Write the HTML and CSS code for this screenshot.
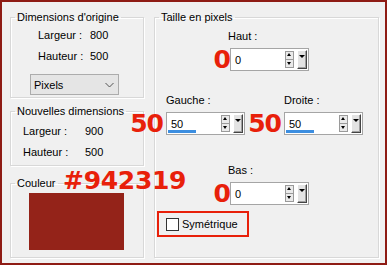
FILE: index.html
```html
<!DOCTYPE html>
<html lang="fr">
<head>
<meta charset="utf-8">
<link rel="stylesheet" href="styles.css">
</head>
<body>
<div class="frame">
  <div class="col-left">
    <fieldset class="grp g1">
      <legend>Dimensions d'origine</legend>
      <div class="inner in1">
        <div class="kv kv1">
          <span>Largeur :</span><span>800</span>
          <span>Hauteur :</span><span>500</span>
        </div>
        <div class="select"><span>Pixels</span>
          <svg width="9" height="6" viewBox="0 0 9 6"><path d="M0.5 1 L4.5 5 L8.5 1" fill="none" stroke="#555" stroke-width="1"/></svg>
        </div>
      </div>
    </fieldset>
    <fieldset class="grp g2">
      <legend>Nouvelles dimensions</legend>
      <div class="inner in2">
        <div class="kv kv2">
          <span>Largeur :</span><span>900</span>
          <span>Hauteur :</span><span>500</span>
        </div>
      </div>
    </fieldset>
    <fieldset class="grp g3">
      <legend>Couleur</legend>
      <div class="inner in3">
        <div class="swatch"></div>
      </div>
    </fieldset>
  </div>
  <fieldset class="grp g4">
    <legend>Taille en pixels</legend>
    <div class="field f-haut">
      <div class="lbl">Haut :</div>
      <div class="row"><span class="ann ann0">0</span>
        <div class="spin"><span class="val">0</span><span class="arrows"><i class="up"></i><i class="dn"></i></span><span class="drop"><i></i></span></div>
      </div>
    </div>
    <div class="pair">
      <div class="field f-gauche">
        <div class="lbl">Gauche :</div>
        <div class="row"><span class="ann ann50">50</span>
          <div class="spin"><span class="val">50</span><span class="bar"></span><span class="arrows"><i class="up"></i><i class="dn"></i></span><span class="drop"><i></i></span></div>
        </div>
      </div>
      <div class="field f-droite">
        <div class="lbl">Droite :</div>
        <div class="row"><span class="ann ann50">50</span>
          <div class="spin"><span class="val">50</span><span class="bar"></span><span class="arrows"><i class="up"></i><i class="dn"></i></span><span class="drop"><i></i></span></div>
        </div>
      </div>
    </div>
    <div class="field f-bas">
      <div class="lbl">Bas :</div>
      <div class="row"><span class="ann ann0">0</span>
        <div class="spin"><span class="val">0</span><span class="arrows"><i class="up"></i><i class="dn"></i></span><span class="drop"><i></i></span></div>
      </div>
    </div>
    <label class="sym"><span class="cb"></span><span>Symétrique</span></label>
  </fieldset>
  <div class="hex">#942319</div>
</div>
</body>
</html>
```
FILE: styles.css
```css
html, body { margin: 0; padding: 0; }
body {
  font-family: "Liberation Sans", Arial, sans-serif;
  font-size: 11px;
  line-height: 14px;
  color: #000;
  background: #f0f0f0;
}
.frame {
  position: relative;
  width: 387px;
  height: 265px;
  box-sizing: border-box;
  border: 2px solid #8e1b14;
  background: #f0f0f0;
  display: flex;
  gap: 10px;
  padding: 8px 6px 5px 8px;
}
.col-left {
  width: 134px;
  display: flex;
  flex-direction: column;
}
.grp {
  margin: 0;
  padding: 0;
  border: 1px solid #d8d8d8;
  box-shadow: inset 1px 1px 0 #fff, 1px 1px 0 #fff;
  min-width: 0;
  box-sizing: border-box;
}
.grp legend {
  padding: 0 2px;
  margin-left: 4px;
  line-height: 14px;
  white-space: nowrap;
}
.g1 { height: 88px; }
.g2 { height: 62px; margin-top: 6px; }
.g3 { height: 82px; margin-top: 10px; }
.g4 { width: 225px; height: 248px; }
.in1 { padding: 4px 0 0 27px; }
.in2 { padding: 6px 0 0 12px; }
.in3 { padding: 3px 0 0 18px; }

.kv {
  display: grid;
  row-gap: 7px;
}
.kv1 { grid-template-columns: 52px auto; }
.kv2 { grid-template-columns: 62px auto; }

.select {
  margin: 11px 0 0 -8px;
  width: 89px;
  height: 21px;
  box-sizing: border-box;
  border: 1px solid #acacac;
  background: #e5e5e5;
  display: flex;
  align-items: center;
  justify-content: space-between;
  padding: 0 4px 0 3px;
}
.select svg { display: block; margin-top: 1px; }

.swatch {
  width: 95px;
  height: 57px;
  background: #942319;
}

/* right group */
.field { display: flex; flex-direction: column; }
.lbl { line-height: 14px; }
.row { display: flex; align-items: center; margin-top: 5px; }
.f-haut, .f-bas { margin-left: 55px; }
.f-haut { margin-top: 5px; }
.f-haut .lbl, .f-bas .lbl { margin-left: 18px; }
.pair { display: flex; margin-top: 22px; margin-left: -28px; }
.f-gauche .lbl { margin-left: 39px; }
.f-droite .lbl { margin-left: 39px; }
.f-bas { margin-top: 28px; }

.ann {
  color: #e8200a;
  font-family: "DejaVu Sans", sans-serif;
  font-weight: bold;
  font-size: 25px;
  line-height: 20px;
  text-align: right;
  letter-spacing: -1px;
}
.ann0 { width: 20px; }
.ann50 { width: 39px; padding-right: 3px; box-sizing: border-box; }

.spin {
  position: relative;
  width: 79px;
  height: 23px;
  box-sizing: border-box;
  border: 1px solid #a5a5a5;
  background: #fff;
  display: flex;
  align-items: center;
}
.val { flex: 1; padding-left: 4px; }
.bar {
  position: absolute;
  left: 1px;
  bottom: 1px;
  width: 28px;
  height: 3px;
  background: #3c8ee0;
}
.arrows {
  display: flex;
  flex-direction: column;
  width: 9px;
  height: 17px;
  margin-right: 3px;
}
.arrows i {
  position: relative;
  flex: 1;
  box-sizing: border-box;
  border: 1px solid #9a9a9a;
  background: #eaeaea;
}
.arrows i + i { border-top: none; }
.arrows i::after {
  content: "";
  position: absolute;
  left: 1px;
  top: 1px;
  border-left: 2.5px solid transparent;
  border-right: 2.5px solid transparent;
}
.arrows .up::after { border-bottom: 3px solid #000; }
.arrows .dn::after { border-top: 3px solid #000; top: 2px; }
.drop {
  position: relative;
  width: 10px;
  height: 19px;
  box-sizing: border-box;
  margin-right: 1px;
  background: #e3e3e3;
  border-top: 1px solid #fff;
  border-left: 1px solid #fff;
  border-right: 1px solid #444;
  border-bottom: 1px solid #444;
  box-shadow: inset -1px -1px 0 #a0a0a0;
}
.drop i {
  position: absolute;
  left: 1px;
  top: 4px;
  border-left: 3px solid transparent;
  border-right: 3px solid transparent;
  border-top: 3px solid #000;
}

.sym {
  display: flex;
  align-items: center;
  gap: 3px;
  width: 92px;
  height: 26px;
  box-sizing: border-box;
  border: 2px solid #e8200a;
  margin: 6px 0 0 2px;
  padding-left: 7px;
}
.cb {
  width: 13px;
  height: 13px;
  box-sizing: border-box;
  border: 1px solid #333;
  background: #fff;
}

.hex {
  position: absolute;
  left: 61px;
  top: 166px;
  color: #e8200a;
  font-family: "DejaVu Sans", sans-serif;
  font-weight: bold;
  font-size: 25px;
  line-height: 26px;
  letter-spacing: -0.3px;
}
```
